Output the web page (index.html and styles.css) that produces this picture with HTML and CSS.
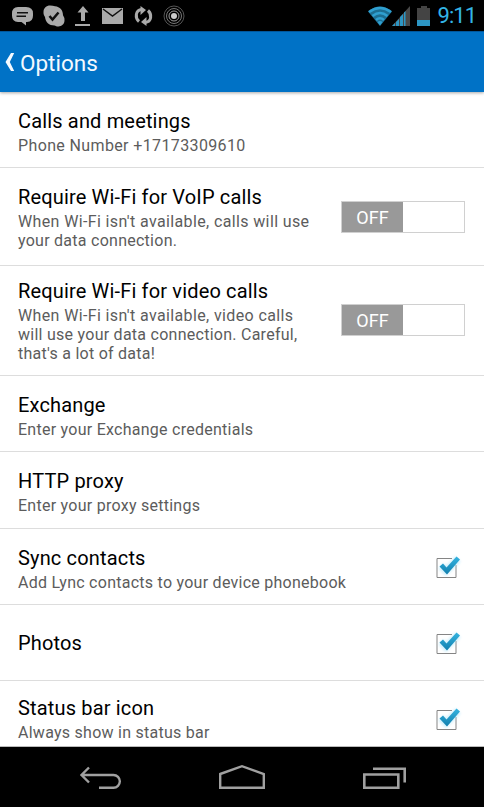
FILE: index.html
```
<!DOCTYPE html>
<html lang="en">
<head>
<meta charset="utf-8">
<title>Options</title>
<link rel="stylesheet" href="styles.css">
</head>
<body>
<svg class="defs" width="0" height="0" aria-hidden="true">
  <defs>
    <linearGradient id="tick" x1="0" y1="0" x2="0" y2="1"><stop offset="0" stop-color="#35b4e0"/><stop offset="1" stop-color="#117fae"/></linearGradient>
    <filter id="glow" x="-50%" y="-50%" width="200%" height="200%"><feGaussianBlur stdDeviation="1.800"/></filter>
    <symbol id="check" viewBox="0 0 36 36">
      <path d="M24 10.500H9v19h19V17" fill="none" stroke="#858585"/>
      <path d="M13 18l5 5 12-12" fill="none" stroke="#9fe0f8" stroke-width="7" opacity=".55" filter="url(#glow)"/>
      <path d="M11.500 18.500l3.500-3 3.500 4L28.500 8.500l3.500 3-13 15z" fill="url(#tick)"/>
    </symbol>
  </defs>
</svg>
<header class="status">
  <div class="status-icons">
    <svg width="22" height="20" viewBox="0 0 22 20"><path d="M7 1h8q7 0 7 6.500v2Q22 16 16 16h-1v3.500L10.500 16H7q-6 0-6-6.500v-2Q1 1 7 1z" fill="#aaa"/><path d="M6 6.700h11M5.500 10.300h9.500" stroke="#111" stroke-width="1.400"/></svg>
    <svg width="22" height="22" viewBox="0 0 22 22"><path d="M7 .5q3 0 5 .8c5 .5 8 4 8 9q1.500 2 1.500 5c0 4-3 6.200-6 6.200-2 0-3-.5-4-1C6 20.500 2.500 17 2 12 .5 10 .5 8.500.5 7c0-4 3-6.500 6.500-6.500z" fill="#aaa"/><path d="M6.500 11l3 3.500L15.500 7.500" fill="none" stroke="#111" stroke-width="2.500"/></svg>
    <svg class="upload" width="16" height="20" viewBox="0 0 16 20"><path d="M8 0l5.500 6.500H10V15H6V6.500H2.500zM0 18h15v2H0z" fill="#aaa"/></svg>
    <svg width="22" height="18" viewBox="0 0 22 18"><path d="M0 1h21v16H0z" fill="#aaa"/><path d="M1 2l9.500 7L20 2" fill="none" stroke="#111" stroke-width="1.500"/></svg>
    <svg width="20" height="20" viewBox="0 0 20 20"><path d="M5 15.500C1 12 1 4 8 3.500M14 4.500C18 8 18 16 11 16.500" fill="none" stroke="#aaa" stroke-width="3"/><path d="M6.500 0l5.500 4-5.500 5zM12.500 20L7 16l5.500-5z" fill="#aaa"/></svg>
    <svg class="rings" width="22" height="22" viewBox="0 0 22 22" fill="none"><circle cx="11" cy="11" r="10" stroke="#555"/><circle cx="11" cy="11" r="7.500" stroke="#777"/><circle cx="11" cy="11" r="5" stroke="#999"/><circle cx="11" cy="11" r="3" fill="#ccc"/></svg>
  </div>
  <div class="status-right">
    <svg width="26" height="20" viewBox="0 0 26 20"><path d="M1 5.500q12-10 24 0L13 20z" fill="#1d6e92"/><g fill="none" stroke="#2f9fd0" stroke-width="2.600"><path d="M2 6q11-8 22 0M5.500 10q7.500-6 15 0M9 14q4-3.500 8 0"/></g><path d="M10.500 16q2.500-2 5 0L13 19.500z" fill="#2f9fd0"/></svg>
    <svg width="18" height="20" viewBox="0 0 18 20"><path d="M18 0v20H0z" fill="#484848"/><path d="M0 20l3-3v3zM4 16l3-3v7H4zM8 11l3-3v12H8zM12 6.500l1.500-1.500v15H12z" fill="#2c96c4"/></svg>
    <svg width="14" height="20" viewBox="0 0 14 20"><path d="M4 0h6v2h3v12H0V2h4z" fill="#444"/><path d="M0 14h13v6H0z" fill="#2c96c4"/></svg>
    <span class="clock">9:11</span>
  </div>
</header>
<div class="appbar">
  <svg width="10" height="20" viewBox="0 0 10 20"><path d="M9.200 1H6L.5 10 6 19h3.200L4.800 10z" fill="#f4faff"/></svg>
  <h1>Options</h1>
</div>
<main class="list">
  <section class="row r1"><div class="text"><h2>Calls and meetings</h2><p class="wide">Phone Number +17173309610</p></div></section>
  <section class="row r2"><div class="text"><h2>Require Wi-Fi for VoIP calls</h2><p><span class="wide">When Wi-Fi isn't available, calls will use</span><br>your data connection.</p></div><div class="toggle"><span>OFF</span></div></section>
  <section class="row r3"><div class="text"><h2>Require Wi-Fi for video calls</h2><p><span class="wide">When Wi-Fi isn't available, video calls</span><br>will use your data connection. Careful,<br>that's a lot of data!</p></div><div class="toggle"><span>OFF</span></div></section>
  <section class="row r4"><div class="text"><h2>Exchange</h2><p>Enter your Exchange credentials</p></div></section>
  <section class="row r5"><div class="text"><h2>HTTP proxy</h2><p>Enter your proxy settings</p></div></section>
  <section class="row r6"><div class="text"><h2>Sync contacts</h2><p>Add Lync contacts to your device phonebook</p></div><svg class="check" width="36" height="36"><use href="#check"/></svg></section>
  <section class="row r7"><div class="text"><h2>Photos</h2></div><svg class="check" width="36" height="36"><use href="#check"/></svg></section>
  <section class="row r8"><div class="text"><h2>Status bar icon</h2><p>Always show in status bar</p></div><svg class="check" width="36" height="36"><use href="#check"/></svg></section>
</main>
<nav class="navbar">
  <svg width="44" height="26" viewBox="0 0 44 26" fill="none" stroke="#a0a0a0" stroke-width="2.400"><path d="M10 3.500L2.500 11 10 18.500M3 11h31.500a6.300 6.300 0 0 1 0 12.700H20"/></svg>
  <svg class="home" width="48" height="26" viewBox="0 0 48 26" fill="none" stroke="#a0a0a0" stroke-width="2.400"><path d="M2.200 10L24 2.200 45.800 10v13.800H2.200z"/></svg>
  <svg width="44" height="26" viewBox="0 0 44 26" fill="none" stroke="#a0a0a0" stroke-width="2.600"><path d="M1.300 10.500h34v13.300h-34zM10 4.800h31.700V18.500"/></svg>
</nav>
</body>
</html>
```
FILE: styles.css
```
* { box-sizing: border-box; }
body { margin: 0; width: 484px; height: 807px; overflow: hidden; background: #fff; font-family: Roboto, "Liberation Sans", sans-serif; display: flex; flex-direction: column; }
h1, h2, p { margin: 0; font-weight: 400; white-space: nowrap; }
.defs { position: absolute; }
.status { height: 31px; flex: none; background: #000; display: flex; justify-content: space-between; align-items: center; padding: 0 8px 0 11px; }
.status-icons { display: flex; align-items: center; gap: 10px; }
.upload { margin: 0 1px 0 0; }
.rings { margin-left: -1px; }
.status-right { display: flex; align-items: center; }
.status-right svg:nth-child(2) { margin: 0 7px 0 -1px; }
.clock { margin-left: 7px; font-size: 22px; line-height: 30px; letter-spacing: -1px; color: #33b5e5; }
.appbar { height: 61px; flex: none; background: #0072c6; border-top: 1px solid #00579c; box-shadow: 0 1px 3px rgba(0, 0, 0, .35); position: relative; display: flex; align-items: center; gap: 5px; padding: 0 0 0 5px; }
.appbar h1 { font-size: 22.500px; line-height: 28px; color: #f4faff; letter-spacing: 0; padding-top: 1px; }
.list { flex: 1; min-height: 0; overflow: hidden; border-bottom: 1px solid #bbb; }
.row { display: flex; justify-content: space-between; align-items: center; border-bottom: 1px solid #ddd; padding: 0 19px 0 18px; }
.r1 { height: 76px; }
.r2 { height: 98px; }
.r3 { height: 110px; }
.r4 { height: 76px; }
.r5 { height: 77px; }
.r6, .r7, .r8 { height: 76px; }
.r1 .text, .r4 .text, .r6 .text { padding-top: 4px; }
.r5 .text, .r7 .text { padding-top: 2px; }
.text h2 { font-size: 20px; line-height: 27px; color: #000; letter-spacing: .16px; }
.text p { font-size: 16px; line-height: 19px; color: #5c5c5c; letter-spacing: .26px; padding-top: 1px; }
.text .wide { letter-spacing: .37px; }
.toggle { width: 124px; height: 32px; border: 1px solid #d0d0d0; background: #fff; flex: none; }
.r3 .toggle { margin-bottom: 2px; }
.toggle span { display: block; width: 61px; height: 30px; background: #999; color: #fff; font-size: 18px; line-height: 32px; text-align: center; }
.check { flex: none; margin: 0 1px 2px 0; }
.navbar { height: 60px; flex: none; background: #000; display: flex; align-items: flex-start; justify-content: space-between; padding: 17px 77px 0 79px; }
.home { margin-left: -2px; }
```
